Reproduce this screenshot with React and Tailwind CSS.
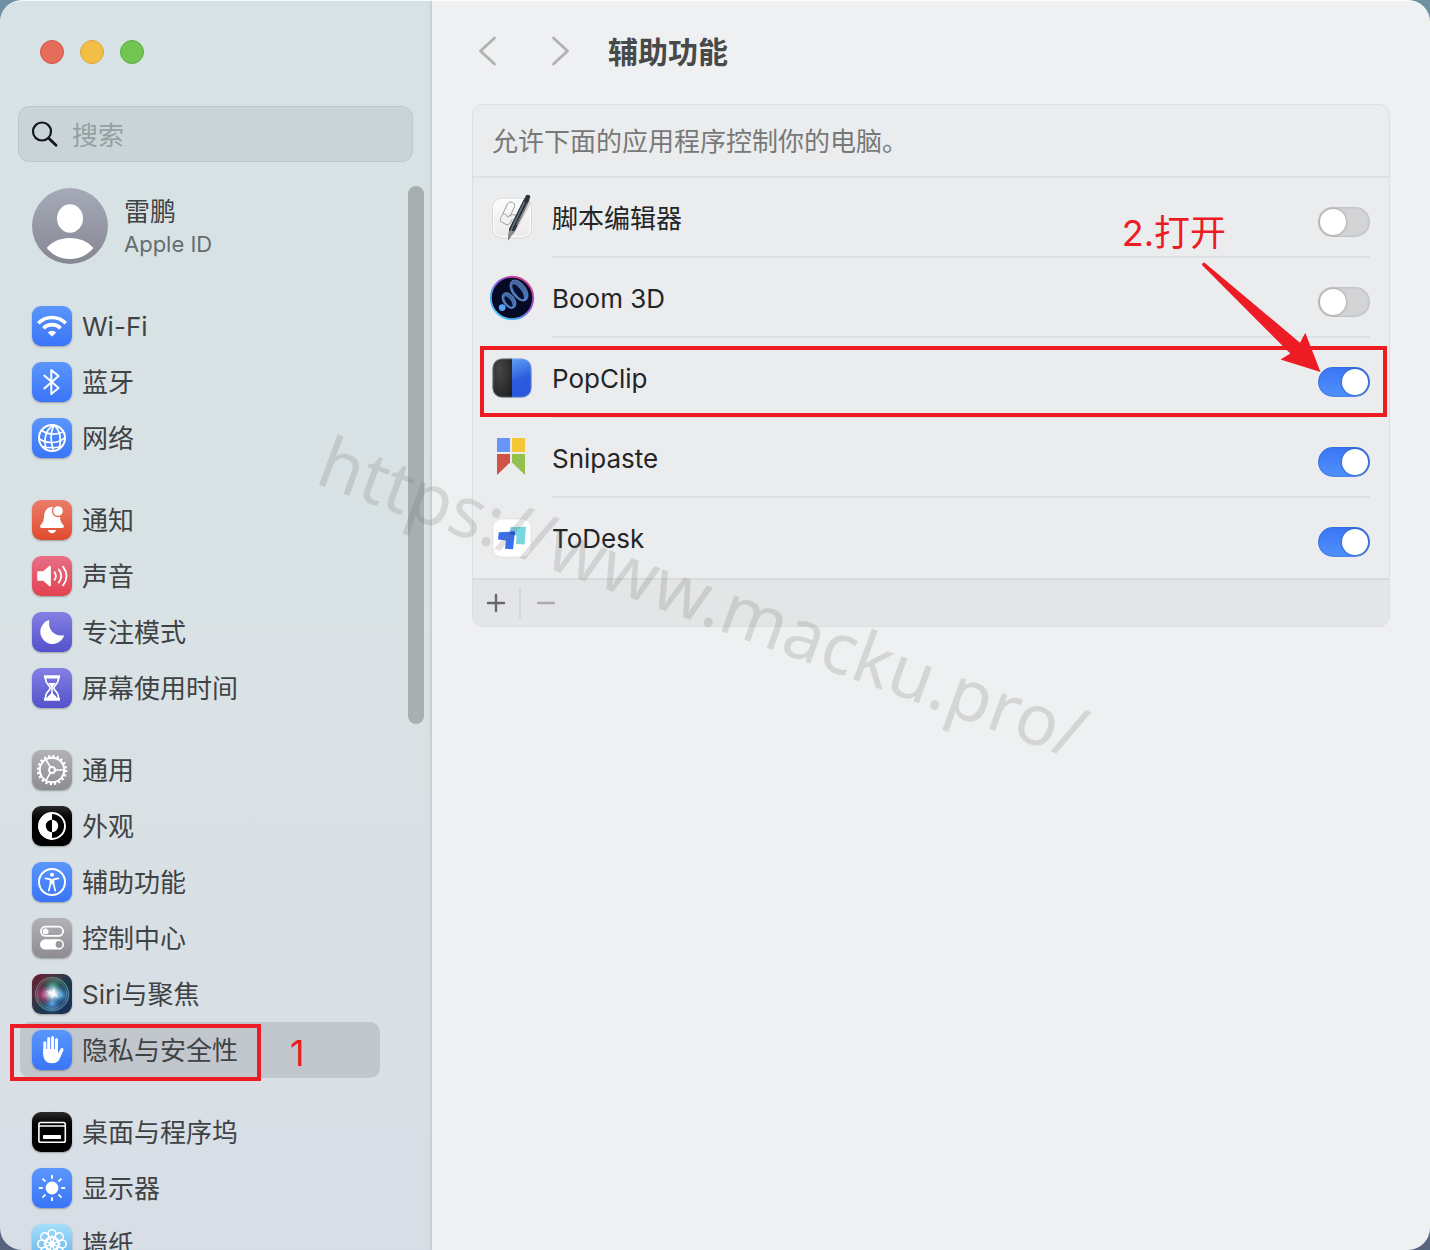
import React, { useState } from "react";

/* ---------- sidebar glyphs, all on a 40x40 grid ---------- */

const Glyph = ({ children }) => (
  <svg viewBox="0 0 40 40" className="size-10" fill="none" stroke="none" aria-hidden="true">
    {children}
  </svg>
);

const WifiGlyph = () => (
  <Glyph>
    <g stroke="#fff" strokeWidth="3.6">
      <path d="M6.3 17.2a19.4 19.4 0 0 1 27.4 0" />
      <path d="M11.4 22.2a12.2 12.2 0 0 1 17.2 0" />
    </g>
    <path d="M20 30.6l-4.3-4.2a6.2 6.2 0 0 1 8.6 0z" fill="#fff" />
  </Glyph>
);

const BluetoothGlyph = () => (
  <Glyph>
    <path d="M12.3 13.6L26.6 26 19.3 32V8l7.3 6L12.3 26.4" stroke="#fff" strokeWidth="2" strokeLinejoin="round" strokeLinecap="round" />
  </Glyph>
);

const GlobeGlyph = () => (
  <Glyph>
    <g stroke="#fff" strokeWidth="1.7">
      <circle cx="20" cy="20" r="13" strokeWidth="2" />
      <path d="M22 7.2C18.5 14 18.5 24 21.5 32.8" />
      <path d="M22 7.2C13.5 11 11 22 14.5 31.5" />
      <path d="M22 7.2C28 12 30 22 27 30.8" />
      <path d="M9.5 12.5C15 16.5 24 17.5 31.5 13.8" />
      <path d="M7 20.5C13 25.5 26 26.5 33 19.5" />
      <path d="M10.5 28.5C16 30 24 29.8 29.5 28.5" />
    </g>
  </Glyph>
);

const BellGlyph = () => (
  <Glyph>
    <mask id="bell-cut">
      <rect width="40" height="40" fill="#fff" />
      <circle cx="26" cy="11" r="6.2" fill="#000" />
    </mask>
    <path d="M20 6.8c-5 .6-7.6 4.2-7.9 8.8-.3 4.6-.7 6.6-3.3 9.3-1.3 1.4-.9 3.1 1 3.1h20.4c1.9 0 2.3-1.7 1-3.1-2.6-2.7-3-4.7-3.3-9.3C27.6 11 25 7.4 20 6.8z" fill="#fff" mask="url(#bell-cut)" />
    <circle cx="26" cy="11" r="4.8" fill="#fff" />
    <path d="M15.8 30h8.4c-.6 1.9-2.2 3.2-4.2 3.2s-3.6-1.3-4.2-3.2z" fill="#fff" />
  </Glyph>
);

const SpeakerGlyph = () => (
  <Glyph>
    <path d="M6.6 15.2h4.6l6-5.2c.8-.6 1.7-.2 1.7.8v18.4c0 1-.9 1.4-1.7.8l-6-5.2H6.6c-.9 0-1.4-.5-1.4-1.4v-6.8c0-.9.5-1.4 1.4-1.4z" fill="#fff" />
    <g stroke="#fff" strokeWidth="1.8" strokeLinecap="round">
      <path d="M22.6 16.2c1.6 2.4 1.6 5.2 0 7.6" />
      <path d="M26.8 13.4c3.1 4.2 3.1 9 0 13.2" />
      <path d="M31 10.6c4.5 5.9 4.5 12.9 0 18.8" />
    </g>
  </Glyph>
);

const MoonGlyph = () => (
  <Glyph>
    <path d="M16.4 8.3c.5-.2 1 .2.9.7-1.7 8.3 5 15.8 13.8 14.3.6-.1 1 .4.8.9A12.2 12.2 0 1 1 16.4 8.3z" fill="#fff" />
  </Glyph>
);

const HourglassGlyph = () => (
  <Glyph>
    <path d="M13.6 9h12.8v2.6c0 4.4-4.6 5.6-4.6 8.4s4.6 4 4.6 8.4V31H13.6v-2.6c0-4.4 4.6-5.6 4.6-8.4s-4.6-4-4.6-8.4z" stroke="#fff" strokeWidth="1.7" />
    <path d="M12 7.3h16v3.2H12zM12 29.7h16v3.1H12z" fill="#fff" />
    <path d="M16.2 15h7.6c-1.2 1.6-3 2.8-3 4.6V25c.4 1.4 3.4 2.6 4.4 5.400H14.8c1-2.800 4-4 4.400-5.400v-5.400c0-1.800-1.800-3-3-4.600z" fill="#fff" />
  </Glyph>
);

const GearGlyph = () => (
  <Glyph>
    <circle cx="20" cy="20" r="14" stroke="#fff" strokeWidth="2.4" strokeDasharray="2.2 2.198" />
    <g stroke="#fff" strokeWidth="2">
      <circle cx="20" cy="20" r="12.2" />
      <circle cx="20" cy="20" r="3" strokeWidth="1.8" />
      <path d="M23 20h9M18.5 17.4l-4.7-8M18.5 22.6l-4.7 8" strokeWidth="1.6" />
    </g>
  </Glyph>
);

const AppearanceGlyph = () => (
  <Glyph>
    <circle cx="20" cy="20" r="13" stroke="#fff" strokeWidth="1.9" />
    <path d="M20 6.5a13.5 13.5 0 0 0 0 27v-7.3a6.2 6.2 0 0 1 0-12.4z" fill="#fff" />
    <path d="M20 13.8a6.2 6.2 0 0 1 0 12.4z" fill="#fff" />
  </Glyph>
);

const AccessibilityGlyph = () => (
  <Glyph>
    <circle cx="20" cy="20" r="13" stroke="#fff" strokeWidth="2" />
    <circle cx="20" cy="12.8" r="2" fill="#fff" />
    <path d="M13.5 16.4L18.5 17.4V21.5L16.8 28.6M26.5 16.4L21.5 17.4V21.5L23.2 28.6" stroke="#fff" strokeWidth="1.7" strokeLinecap="round" strokeLinejoin="round" />
    <path d="M17.9 16.9h4.2v5.4h-4.2z" fill="#fff" />
  </Glyph>
);

const ControlGlyph = () => (
  <Glyph>
    <rect x="8.9" y="8.7" width="22.2" height="9.2" rx="4.6" stroke="#fff" strokeWidth="1.8" />
    <circle cx="13.6" cy="13.3" r="2.9" fill="#fff" />
    <path d="M13.2 21.2h13.6a5.2 5.2 0 0 1 0 10.4H13.2a5.2 5.2 0 0 1 0-10.4z" fill="#fff" />
    <circle cx="27" cy="26.4" r="3.4" fill="#97969b" />
  </Glyph>
);

const SiriGlyph = () => (
  <Glyph>
    <defs>
      <radialGradient id="siri-core">
        <stop offset="0" stopColor="#fff" />
        <stop offset=".35" stopColor="#e9f6ff" stopOpacity=".85" />
        <stop offset="1" stopColor="#7fb7d8" stopOpacity="0" />
      </radialGradient>
      <radialGradient id="siri-pink">
        <stop offset="0" stopColor="#e0457f" stopOpacity=".95" />
        <stop offset="1" stopColor="#a02a5e" stopOpacity="0" />
      </radialGradient>
      <radialGradient id="siri-blue">
        <stop offset="0" stopColor="#5fb0ee" />
        <stop offset="1" stopColor="#2463a8" stopOpacity="0" />
      </radialGradient>
      <radialGradient id="siri-green">
        <stop offset="0" stopColor="#5cc5a4" stopOpacity=".9" />
        <stop offset="1" stopColor="#1f6b5a" stopOpacity="0" />
      </radialGradient>
      <linearGradient id="siri-ring" x1="0" y1="0" x2="1" y2="1">
        <stop offset="0" stopColor="#b0606e" />
        <stop offset=".5" stopColor="#63b59c" />
        <stop offset="1" stopColor="#6f9be0" />
      </linearGradient>
    </defs>
    <circle cx="21" cy="13" r="13" fill="url(#siri-green)" />
    <circle cx="20" cy="29" r="12" fill="url(#siri-blue)" />
    <circle cx="12" cy="21" r="11" fill="url(#siri-pink)" />
    <circle cx="29" cy="21" r="10" fill="url(#siri-blue)" />
    <circle cx="20" cy="20" r="16.4" stroke="url(#siri-ring)" strokeWidth="1.2" opacity=".7" />
    <circle cx="20" cy="20" r="14.6" stroke="url(#siri-ring)" strokeWidth=".9" opacity=".6" />
    <ellipse cx="20.5" cy="19.5" rx="11" ry="9" fill="url(#siri-core)" />
    <path d="M14 17l6 1 3-5-.2 5.6 4.2 5.4-5.4-2L20 25l-1.6-4.8z" fill="#fff" opacity=".6" />
  </Glyph>
);

const HandGlyph = () => (
  <Glyph>
    <g stroke="#fff" strokeLinecap="round" strokeWidth="3">
      <path d="M12.8 12.8V24M16.7 8.6V22M20.6 7.6V22M24.5 9.4V22" />
    </g>
    <path d="M11.3 19H26v4.4l2.500-4.400c.9-1.600 3.100-1.100 3 .7 0 .4-.2.9-.3 1.200l-3.400 7.700c-1.500 3.300-3.900 4.700-7.600 4.700-5.600 0-8.900-3.400-8.900-9z" fill="#fff" />
  </Glyph>
);

const DockGlyph = () => (
  <Glyph>
    <rect x="6.9" y="10.5" width="26.4" height="19.8" rx="1.8" stroke="#fff" strokeWidth="1.6" />
    <path d="M7 14h26" stroke="#fff" strokeWidth="1.3" />
    <rect x="11" y="23" width="18" height="4" rx=".8" fill="#fff" />
  </Glyph>
);

const SunGlyph = () => (
  <Glyph>
    <circle cx="20" cy="20" r="6.4" fill="#fff" />
    <path d="M20 10V7.7M20 30v2.3M10 20H7.7M30 20h2.3M12.9 12.9l-1.8-1.8M27.1 12.9l1.8-1.8M12.9 27.1l-1.8 1.8M27.1 27.1l1.8 1.8" stroke="#fff" strokeWidth="2" strokeLinecap="round" />
  </Glyph>
);

const FlowerGlyph = () => (
  <Glyph>
    <g stroke="#fff" strokeWidth="1.6">
      {[0, 45, 90, 135, 180, 225, 270, 315].map((a) => (
        <g key={a} transform={`rotate(${a} 20 20)`}>
          <circle cx="20" cy="9.8" r="4" />
          <ellipse cx="20" cy="15.6" rx="1.7" ry="3.4" strokeWidth="1.2" />
        </g>
      ))}
    </g>
    <circle cx="20" cy="20" r="2" fill="#fff" />
  </Glyph>
);

const blue = "bg-linear-to-b from-[#5a96fb] to-[#3a74f8]";
const purple = "bg-linear-to-b from-[#8480e4] to-[#5450cb]";
const gray = "bg-linear-to-b from-[#b2b1b6] to-[#8d8c91]";
const black = "bg-linear-to-b from-[#2a2a2a] via-black to-black";

const groups = [
  [
    { id: "wifi", label: "Wi-Fi", icon: WifiGlyph, tile: blue },
    { id: "bluetooth", label: "蓝牙", icon: BluetoothGlyph, tile: blue },
    { id: "network", label: "网络", icon: GlobeGlyph, tile: blue },
  ],
  [
    { id: "notifications", label: "通知", icon: BellGlyph, tile: "bg-linear-to-b from-[#ea7c69] to-[#e2492c]" },
    { id: "sound", label: "声音", icon: SpeakerGlyph, tile: "bg-linear-to-b from-[#e86e86] to-[#e2404f]" },
    { id: "focus", label: "专注模式", icon: MoonGlyph, tile: purple },
    { id: "screen-time", label: "屏幕使用时间", icon: HourglassGlyph, tile: purple },
  ],
  [
    { id: "general", label: "通用", icon: GearGlyph, tile: gray },
    { id: "appearance", label: "外观", icon: AppearanceGlyph, tile: black },
    { id: "accessibility", label: "辅助功能", icon: AccessibilityGlyph, tile: blue },
    { id: "control-center", label: "控制中心", icon: ControlGlyph, tile: gray },
    { id: "siri", label: "Siri与聚焦", icon: SiriGlyph, tile: "bg-linear-to-br from-[#6d1230] via-[#23384a] to-[#16305a]" },
    { id: "privacy", label: "隐私与安全性", icon: HandGlyph, tile: blue },
  ],
  [
    { id: "dock", label: "桌面与程序坞", icon: DockGlyph, tile: black },
    { id: "displays", label: "显示器", icon: SunGlyph, tile: blue },
    { id: "wallpaper", label: "墙纸", icon: FlowerGlyph, tile: "bg-linear-to-b from-[#a5dffa] to-[#5eaeea]" },
  ],
];

/* ---------- app icons ---------- */

const ScriptEditorIcon = () => (
  <svg viewBox="0 0 48 48" className="size-12" fill="none" aria-hidden="true">
    <defs>
      <linearGradient id="se-paper" x1="0" y1="0" x2="0" y2="1">
        <stop offset="0" stopColor="#fcfcfc" />
        <stop offset="1" stopColor="#ebe9e9" />
      </linearGradient>
    </defs>
    <rect x="4.5" y="5" width="39" height="39" rx="8.5" fill="url(#se-paper)" stroke="#dadada" />
    <rect x="5.5" y="5.5" width="37" height="37" rx="8" stroke="#fff" />
    {/* scroll outline */}
    <path d="M14.5 20.5L19.500 9.800c1.800-3.400 8.500-1.300 7 2.800L21.800 23M14.500 20.500c2.600-1.200 4.800.4 5 3 1.800-2.600 4.800-3.600 8.500-2.200M14.500 20.500c-1.800 2.700-3.200 5.500-1 7.500l4.200 2.300c2 1 3.300.2 4.300-1.300l2.500-4" stroke="#9d9d9d" strokeWidth="1" />
    <path d="M40.800 5.500l2 4.500L26 40l-1.500 1 .5-4z" fill="#000" opacity=".15" />
    {/* pen */}
    <path d="M38.2 1.3c1-1.500 4.500-.3 4 1.800L39.800 10 27 36.500 20 46.500l1.200-12L34.200 8.500z" fill="#2c3238" />
    <path d="M36.5 8L24 34l-2.200 7.500" stroke="#6b7f8e" strokeWidth="1.3" />
    <path d="M39.7 8.800L28.500 31" stroke="#c2a489" strokeWidth=".8" />
    <path d="M21.4 36.500l4.800.8L20 46.500z" fill="#8a9095" />
  </svg>
);

const BoomIcon = () => (
  <svg viewBox="0 0 48 48" className="size-12" fill="none" aria-hidden="true">
    <defs>
      <linearGradient id="boom-ring" x1="1" y1=".1" x2=".2" y2="1">
        <stop offset="0" stopColor="#e83a7c" />
        <stop offset=".45" stopColor="#8d4fe0" />
        <stop offset=".75" stopColor="#4aa4f4" />
        <stop offset="1" stopColor="#55d0fa" />
      </linearGradient>
      <linearGradient id="boom-wave" x1="1" y1="0" x2="0" y2="1">
        <stop offset="0" stopColor="#445a94" />
        <stop offset="1" stopColor="#4a8ad6" />
      </linearGradient>
    </defs>
    <circle cx="24" cy="24" r="21.2" fill="#050b24" stroke="url(#boom-ring)" strokeWidth="1.9" />
    <g transform="rotate(-36 31 16.5)">
      <ellipse cx="31" cy="16.5" rx="7" ry="12" fill="url(#boom-wave)" stroke="#6d88c4" strokeWidth=".7" />
      <ellipse cx="29.6" cy="17" rx="3.2" ry="9" fill="#070f2c" />
    </g>
    <g transform="rotate(-36 21 26.5)">
      <ellipse cx="21" cy="26.5" rx="5.6" ry="8.8" fill="url(#boom-wave)" stroke="#69a4e2" strokeWidth=".7" />
      <ellipse cx="20" cy="27" rx="2.4" ry="6.2" fill="#070f2c" />
    </g>
    <circle cx="14.2" cy="33.6" r="3.4" fill="#56a4f8" />
  </svg>
);

const PopClipIcon = () => (
  <svg viewBox="0 0 48 48" className="size-12" fill="none" aria-hidden="true">
    <defs>
      <radialGradient id="pop-dark" cx=".35" cy=".3" r=".9">
        <stop offset="0" stopColor="#474747" />
        <stop offset="1" stopColor="#1e1e1e" />
      </radialGradient>
      <linearGradient id="pop-blue" x1=".3" y1="0" x2=".5" y2="1">
        <stop offset="0" stopColor="#5b9bf2" />
        <stop offset=".55" stopColor="#2c5bdf" />
        <stop offset="1" stopColor="#2a56dc" />
      </linearGradient>
    </defs>
    <path d="M24 4.5H14A9.5 9.5 0 0 0 4.5 14v20a9.5 9.5 0 0 0 9.5 9.5h10z" fill="url(#pop-dark)" />
    <path d="M24 4.5h10a9.5 9.5 0 0 1 9.5 9.5v20a9.5 9.5 0 0 1-9.5 9.5H24z" fill="url(#pop-blue)" />
    <rect x="4.9" y="4.9" width="38.2" height="38.2" rx="9.2" stroke="#a8bdd0" strokeWidth=".8" opacity=".6" />
  </svg>
);

const SnipasteIcon = () => (
  <svg viewBox="0 0 48 48" className="size-12" aria-hidden="true">
    <path d="M9 4h13v14H9z" fill="#6794f7" />
    <path d="M24 4h13v14H24z" fill="#f3c737" />
    <path d="M9 20h13v8.5L9 41z" fill="#d05244" />
    <path d="M24 20h13v21L24 28.5z" fill="#94c14e" />
  </svg>
);

const ToDeskIcon = () => (
  <svg viewBox="0 0 48 48" className="size-12" fill="none" aria-hidden="true">
    <rect x="4.9" y="4.9" width="38.2" height="38.2" rx="8.5" fill="#fff" stroke="#dedede" strokeWidth=".8" />
    <path d="M22.5 13L38 12.7 36.5 30.5 28 30 28.7 21.5 21.5 20.5z" fill="#77d6e0" />
    <path d="M10.8 18.3L27 17.5 25 35.3 17 34.7 18 26.5 10 25.5z" fill="#3a6ff2" />
    <path d="M22 17.8L27 17.5 26.7 21.2 21.6 20.5z" fill="#1f4fd8" />
  </svg>
);

const apps = [
  { id: "script-editor", name: "脚本编辑器", icon: ScriptEditorIcon, on: false },
  { id: "boom", name: "Boom 3D", icon: BoomIcon, on: false },
  { id: "popclip", name: "PopClip", icon: PopClipIcon, on: true, marked: true },
  { id: "snipaste", name: "Snipaste", icon: SnipasteIcon, on: true },
  { id: "todesk", name: "ToDesk", icon: ToDeskIcon, on: true },
];

/* ---------- pieces ---------- */

const Switch = ({ id, checked, onChange }) => (
  <input
    id={id}
    type="checkbox"
    role="switch"
    checked={checked}
    onChange={onChange}
    className="mt-2.5 flex h-[30px] w-[52px] shrink-0 appearance-none items-center rounded-full bg-[#d3d4d6] px-0.5 shadow-[inset_0_0_3px_rgba(0,0,0,0.2)] before:size-[26px] before:rounded-full before:bg-white before:shadow-[0_0_3px_rgba(0,0,0,0.35)] before:content-[''] checked:justify-end checked:bg-linear-to-b checked:from-[#3b76f4] checked:to-[#5090fb]"
  />
);

const Arrow = () => (
  <svg viewBox="0 0 120 112" className="absolute -top-[76px] right-[68px] z-10 h-[112px] w-[120px]" aria-hidden="true">
    <path d="M4.5 1.5L99 80.7l5.3-10L119.5 110 79.5 97.5l9.8-6L1.5 3.5A1.8 1.8 0 0 1 4.5 1.5z" fill="#ed1c24" />
  </svg>
);

const SidebarItem = ({ item, active, onSelect }) => {
  const Icon = item.icon;
  return (
    <li className="relative">
      <a
        href={`#${item.id}`}
        onClick={() => onSelect(item.id)}
        className={`flex h-14 items-center gap-2.5 rounded-[10px] px-3 ${active ? "bg-[#c2c7ce]" : ""}`}
      >
        <span className={`size-10 shrink-0 overflow-hidden rounded-[9px] shadow-[0_1px_2px_rgba(0,0,0,0.3)] ${item.tile}`}>
          <Icon />
        </span>
        <span className="pt-0.5 text-[26px] leading-8 text-[#3f4344]">{item.label}</span>
      </a>
      {item.id === "privacy" && (
        <>
          <span className="pointer-events-none absolute top-0.5 -left-2.5 h-[57px] w-[251px] border-4 border-[#ed1c24]" />
          <span className="pointer-events-none absolute top-2 left-[270px] text-[36px] leading-[46px] text-[#ed1c24]">1</span>
        </>
      )}
    </li>
  );
};

const Sidebar = () => {
  const [selected, setSelected] = useState("privacy");

  return (
    <aside className="flex w-[432px] shrink-0 flex-col border-r border-[#c3cdd0] bg-linear-to-b from-[#d7e2e6] via-[#d9e2e4] to-[#d8dee6] shadow-[inset_-2px_0_2px_rgba(0,0,0,0.04)]">
      {/* Window buttons */}
      <div className="flex gap-4 px-10 pt-10">
        <button aria-label="关闭" className="size-6 rounded-full border border-[#d0574a] bg-[#e66c5c]" />
        <button aria-label="最小化" className="size-6 rounded-full border border-[#d9a63c] bg-[#f2bf46]" />
        <button aria-label="缩放" className="size-6 rounded-full border border-[#5cae41] bg-[#70c650]" />
      </div>

      {/* Search */}
      <label className="mx-[18px] mt-[42px] flex h-14 items-center gap-[13px] rounded-[11px] border border-[#bcc8cb] bg-[#c8d4d7] px-3">
        <svg viewBox="0 0 28 28" className="size-7 shrink-0" fill="none" stroke="#151718" strokeLinecap="round" aria-hidden="true">
          <circle cx="11" cy="11.5" r="9" strokeWidth="2.2" />
          <path d="M18 18.5l7 6.8" strokeWidth="2.8" />
        </svg>
        <input type="search" aria-label="搜索" placeholder="搜索" className="min-w-0 flex-1 bg-transparent pt-1 text-[26px] leading-8 text-[#3f4344] outline-none placeholder:text-[#95a0a1]" />
      </label>

      <div className="mt-6 flex min-h-0 flex-1">
        <nav className="ml-5 w-[360px] shrink-0 pt-0.5">
          <a href="#apple-id" className="flex items-center gap-4 px-3">
            <svg viewBox="0 0 76 76" className="size-[76px]" aria-hidden="true">
              <defs>
                <linearGradient id="avatar" x1="0" y1="0" x2="0" y2="1">
                  <stop offset="0" stopColor="#a6a9b7" />
                  <stop offset="1" stopColor="#858892" />
                </linearGradient>
              </defs>
              <circle cx="38" cy="38" r="38" fill="url(#avatar)" />
              <ellipse cx="38" cy="30.5" rx="13" ry="14.3" fill="#fff" />
              <path d="M14.8 60C20 53.5 28.5 50 38 50s18 3.5 23.4 10C55.5 67 47.500 71 38 71s-17.500-4-23.200-11z" fill="#fff" />
            </svg>
            <span className="flex flex-col pt-1">
              <span className="text-[26px] leading-8 text-[#3f4344]">雷鹏</span>
              <span className="text-[22px] leading-8 text-[#646d70]">Apple ID</span>
            </span>
          </a>
          <div className="mt-[34px] flex flex-col gap-[26px]">
            {groups.map((items, i) => (
              <ul key={i}>
                {items.map((item) => (
                  <SidebarItem key={item.id} item={item} active={item.id === selected} onSelect={setSelected} />
                ))}
              </ul>
            ))}
          </div>
        </nav>
        <div className="ml-7 h-[538px] w-4 rounded-full bg-[#a8afb1]" />
      </div>
    </aside>
  );
};

const AppRow = ({ app, last }) => {
  const [on, setOn] = useState(app.on);
  const Icon = app.icon;
  return (
    <li className="relative flex items-center pr-[19px] pl-[15px]">
      <Icon />
      <div className={`ml-4 flex h-20 flex-1 items-center justify-between border-b-2 ${last ? "border-transparent" : "border-[#dfe0e2]"}`}>
        <label htmlFor={app.id} className="pt-1 text-[26px] leading-8 text-[#242526]">
          {app.name}
        </label>
        <Switch id={app.id} checked={on} onChange={() => setOn(!on)} />
      </div>
      {app.marked && (
        <>
          <span className="pointer-events-none absolute top-2 right-0.5 bottom-px left-[7px] border-4 border-[#ed1c24]" />
          <Arrow />
          <span className="absolute -top-[128px] right-[163px] text-[36px] leading-[46px] whitespace-nowrap text-[#ed1c24]">2.打开</span>
        </>
      )}
    </li>
  );
};

const Content = () => (
  <main className="min-w-0 flex-1 bg-[#eff0f2] px-10">
    <header className="flex h-[104px] items-center">
      <button aria-label="后退" className="w-8">
        <svg viewBox="0 0 32 32" className="size-8" fill="none" stroke="#b0b1b2" strokeWidth="2.8" strokeLinecap="round" strokeLinejoin="round">
          <path d="M22.5 2L8.5 15l14 13" />
        </svg>
      </button>
      <button aria-label="前进" className="ml-10 w-8">
        <svg viewBox="0 0 32 32" className="size-8" fill="none" stroke="#b0b1b2" strokeWidth="2.8" strokeLinecap="round" strokeLinejoin="round">
          <path d="M9.5 2l14 13-14 13" />
        </svg>
      </button>
      <h1 className="ml-8 text-[30px] leading-10 font-bold text-[#484a4a]">辅助功能</h1>
    </header>

    <section className="rounded-[11px] border border-[#dcdee0] bg-[#ebecee]">
      <p className="flex h-[73px] items-center border-b-2 border-[#dfe0e2] px-[19px] pt-0.5 text-[26px] leading-8 text-[#777979]">允许下面的应用程序控制你的电脑。</p>
      <ul>
        {apps.map((app, i) => (
          <AppRow key={app.id} app={app} last={i === apps.length - 1} />
        ))}
      </ul>
      <div className="flex h-12 items-center rounded-b-[10px] border-t-2 border-[#d9dadc] bg-[#e4e5e7]">
        <button aria-label="添加" className="flex h-8 w-12 items-center justify-center border-r-2 border-[#d6d7d9]">
          <svg viewBox="0 0 20 20" className="size-5" stroke="#66686a" strokeWidth="2.4" strokeLinecap="round">
            <path d="M2 10h16M10 2v16" />
          </svg>
        </button>
        <button aria-label="移除" className="flex h-8 w-[50px] items-center justify-center">
          <svg viewBox="0 0 20 20" className="size-5" stroke="#abacae" strokeWidth="2.4" strokeLinecap="round">
            <path d="M2 10h16" />
          </svg>
        </button>
      </div>
    </section>
  </main>
);

export default function App() {
  return (
    <div className="relative h-screen overflow-hidden bg-linear-to-b from-[#6f90a3] to-[#56657d] font-['Inter','Noto_Sans_CJK_SC',sans-serif]">
      <div className="relative flex h-full overflow-hidden rounded-[22px] after:pointer-events-none after:absolute after:inset-0 after:rounded-[22px] after:border-t after:border-white/80 after:content-['']">
        <Sidebar />
        <Content />
      </div>

      {/* Watermark */}
      <span className="pointer-events-none absolute top-[418px] left-[337px] origin-top-left rotate-[20deg] font-['Noto_Sans'] text-[71px] leading-[84px] whitespace-nowrap text-[#6b706b]/20">
        https://www.macku.pro/
      </span>
    </div>
  );
}
